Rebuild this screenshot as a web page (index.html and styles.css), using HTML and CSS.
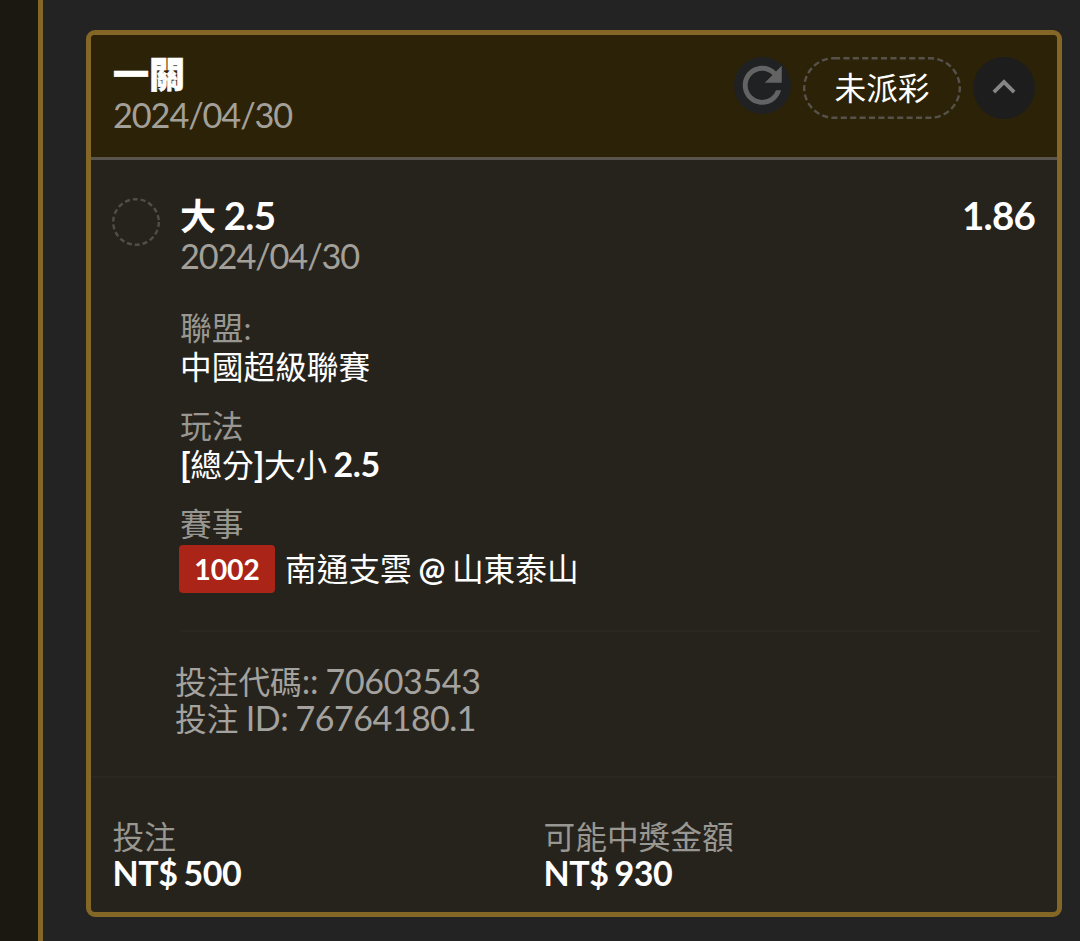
FILE: index.html
```
<!DOCTYPE html>
<html lang="zh-Hant">

<head>
    <meta charset="utf-8">
    <title>未派彩</title>
    <link rel="stylesheet" href="styles.css">
</head>

<body>
    <div class="page">
        <div class="side"></div>
        <div class="bet-card">
            <!-- Header -->
            <div class="bet-header">
                <div class="header-text">
                    <div class="bet-title">一關</div>
                    <div class="date">2024/04/30</div>
                </div>
                <div class="header-actions">
                    <div class="refresh">
                        <svg width="58.5" height="58.5" viewBox="0 0 24 24" fill="#636363">
                            <path d="M17.65 6.35A7.958 7.958 0 0 0 12 4c-4.42 0-7.99 3.58-7.99 8s3.57 8 7.99 8c3.73 0 6.84-2.55 7.73-6h-2.08A5.99 5.99 0 0 1 12 18c-3.31 0-6-2.69-6-6s2.69-6 6-6c1.66 0 3.14.69 4.22 1.78L13 11h7V4l-2.35 2.35z"/>
                        </svg>
                    </div>
                    <div class="status">
                        <svg class="status-border" width="158" height="62" viewBox="0 0 158 62" fill="none">
                            <rect x="1.2" y="1.2" width="155.6" height="59.6" rx="29.8" stroke="#56524a" stroke-width="2.4" stroke-dasharray="6.1 3.3"/>
                        </svg>
                        未派彩
                    </div>
                    <div class="toggle">
                        <svg width="46" height="46" viewBox="0 0 24 24" fill="#858585">
                            <path d="M12 8l-6 6 1.41 1.41L12 10.83l4.59 4.58L18 14z"/>
                        </svg>
                    </div>
                </div>
            </div>

            <!-- Selection -->
            <div class="bet-body">
                <div class="circle">
                    <svg width="48" height="48" viewBox="0 0 48 48" fill="none">
                        <circle cx="24" cy="24" r="22.8" stroke="#504e49" stroke-width="2.4" stroke-dasharray="5 2.96"/>
                    </svg>
                </div>
                <div class="selection">
                    <div class="selection-head">
                        <div class="pick"><span class="pick-zh">大</span> 2.5</div>
                        <div class="odds">1.86</div>
                    </div>
                    <div class="date">2024/04/30</div>

                    <div class="info">
                        <div class="label">聯盟:</div>
                        <div class="value">中國超級聯賽</div>
                    </div>
                    <div class="info">
                        <div class="label">玩法</div>
                        <div class="value play"><b>[</b>總分<b>]</b>大小 <b>2.5</b></div>
                    </div>
                    <div class="info">
                        <div class="label">賽事</div>
                        <div class="match">
                            <span class="badge">1002</span>
                            <span class="teams">南通支雲 <b>@</b> 山東泰山</span>
                        </div>
                    </div>

                    <div class="codes">
                        <div><span class="zh">投注代碼</span>:: 70603543</div>
                        <div class="bet-id"><span class="zh">投注</span> ID: 76764180.1</div>
                    </div>
                </div>
            </div>

            <!-- Footer -->
            <div class="bet-footer">
                <div class="amount">
                    <div class="label">投注</div>
                    <div class="money">NT$ 500</div>
                </div>
                <div class="amount">
                    <div class="label">可能中獎金額</div>
                    <div class="money">NT$ 930</div>
                </div>
            </div>
        </div>
    </div>
</body>

</html>
```

FILE: styles.css
```
* {
    box-sizing: border-box;
}

body {
    margin: 0;
    background: #232323;
    color: #fff;
    font-family: Lato, "Noto Sans CJK TC", sans-serif;
    font-size: 34px;
    word-spacing: -2px;
}

.page {
    display: flex;
    height: 941px;
    overflow: hidden;
}

.side {
    width: 43px;
    background: #1b1812;
    border-right: 5px solid #846626;
}

.bet-card {
    width: 976px;
    height: 887px;
    margin: 30px 0 0 43px;
    background: #26231d;
    border: 5px solid #846626;
    border-radius: 9px;
    overflow: hidden;
}

.bet-header {
    display: flex;
    justify-content: space-between;
    height: 125px;
    padding: 22px 22px 0 22px;
    background: #2c2208;
    border-bottom: 3px solid #5a554c;
}

.bet-title {
    height: 38px;
    line-height: 34px;
    font-size: 36px;
    font-weight: 900;
    -webkit-text-stroke: 0.6px #fff;
}

.date {
    height: 40px;
    line-height: 39px;
    font-size: 34.3px;
    letter-spacing: -1.1px;
    color: #a3a09a;
}

.header-actions {
    display: flex;
}

.refresh,
.toggle {
    display: flex;
    align-items: center;
    justify-content: center;
    border-radius: 50%;
}

.refresh {
    width: 57px;
    height: 57px;
    margin-right: 12px;
    background: #202122;
}

.refresh svg {
    flex: none;
}

.status {
    position: relative;
    width: 158px;
    height: 62px;
    margin-right: 12px;
    line-height: 63px;
    text-align: center;
    font-size: 31.7px;
}

.status-border {
    position: absolute;
    top: 0;
    left: 0;
}

.toggle {
    width: 62px;
    height: 62px;
    padding-bottom: 3px;
    background: #1d1d1d;
}

.bet-body {
    display: flex;
    height: 618px;
    padding: 38px 22px 0 21px;
    border-bottom: 2px solid #2a2722;
}

.circle {
    width: 48px;
    margin-right: 20px;
}

.selection {
    flex: 1;
}

.selection-head {
    display: flex;
    justify-content: space-between;
    height: 39px;
    line-height: 35px;
    font-size: 38.5px;
    font-weight: bold;
    letter-spacing: -0.8px;
    word-spacing: 0;
}

.pick-zh {
    font-size: 36px;
}

.selection .date {
    margin-bottom: 32px;
    line-height: 38px;
}

.info {
    height: 98px;
    font-size: 31.7px;
}

.label {
    height: 39px;
    line-height: 39px;
    font-size: 31.7px;
    color: #999791;
}

.value {
    height: 39px;
    line-height: 39px;
}

.play {
    line-height: 36px;
}

.value b {
    font-size: 34px;
    letter-spacing: -0.4px;
}

.match {
    display: flex;
    align-items: center;
    height: 48px;
    margin-top: 1px;
}

.badge {
    width: 96px;
    height: 48px;
    margin: 0 10px 0 -1px;
    line-height: 48px;
    text-align: center;
    font-size: 28.5px;
    font-weight: bold;
    letter-spacing: -0.2px;
    background: #aa2418;
    border-radius: 4px;
}

.teams {
    line-height: 48px;
    word-spacing: -1.4px;
}

.codes {
    margin: 27px -5px 0 0;
    padding-top: 31px;
    line-height: 36px;
    letter-spacing: -0.35px;
    word-spacing: -0.8px;
    color: #a3a29f;
    border-top: 2px solid #2a2722;
}

.codes div {
    margin-left: -5px;
}

.codes .bet-id {
    letter-spacing: -0.5px;
}

.codes .zh {
    font-size: 31.7px;
    letter-spacing: 0;
}

.bet-footer {
    display: flex;
    padding: 40px 21.5px 0;
}

.amount {
    width: 431px;
}

.amount .label {
    height: 37px;
}

.money {
    line-height: 36px;
    font-weight: bold;
    letter-spacing: -0.4px;
}
```
